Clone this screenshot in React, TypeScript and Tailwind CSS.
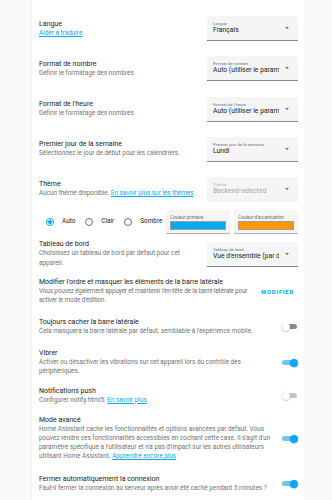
import React from "react";

const font = { fontFamily: "Roboto, 'Noto Sans', sans-serif" };

function Select({ label, value, disabled }: { label: string; value: string; disabled?: boolean }) {
  return (
    <div
      className={`relative w-[91px] h-[25px] shrink-0 bg-[#f5f5f5] rounded-t-[2px] pl-[6px] pt-[5px] ${
        disabled ? "" : "border-b border-[#8a8a8a]"
      }`}
    >
      <div className={`text-[4.3px] leading-[5px] ${disabled ? "text-[#b5b5b5]" : "text-[#6f6f6f]"}`}>{label}</div>
      <div
        className={`text-[6.8px] leading-[9px] whitespace-nowrap overflow-hidden w-[66px] ${
          disabled ? "text-[#a8a8a8]" : "text-[#212121]"
        }`}
      >
        {value}
      </div>
      <div className="absolute right-[9px] top-[11px] w-0 h-0 border-l-[2.5px] border-r-[2.5px] border-t-[2.5px] border-l-transparent border-r-transparent border-t-[#6f6f6f]" />
    </div>
  );
}

function Toggle({ on, muted }: { on?: boolean; muted?: boolean }) {
  return (
    <div className="relative w-[15px] h-[8px] shrink-0 mr-[1px]">
      <div
        className={`absolute left-0 right-0 top-[1.5px] h-[5px] rounded-full ${
          on ? "bg-[#6ec8f5]" : muted ? "bg-[#c4c4c4]" : "bg-[#8a8a8a]"
        }`}
      />
      <div
        className={`absolute top-0 w-[8px] h-[8px] rounded-full shadow-[0_0.5px_1.5px_rgba(0,0,0,0.35)] ${
          on ? "right-[-1px] bg-[#03a9f4]" : "left-[0px] bg-white"
        }`}
      />
    </div>
  );
}

function Row({
  title,
  children,
  control,
  h,
  tight,
}: {
  title: string;
  children?: React.ReactNode;
  control?: React.ReactNode;
  h: string;
  tight?: boolean;
}) {
  return (
    <div className={`flex items-center ${h}`}>
      <div className="flex-1 min-w-0 pr-[6px]">
        <div className="text-[7px] leading-[9px] text-[#212121]">{title}</div>
        <div
          className={`text-[6.4px] leading-[9.3px] text-[#727272] ${tight ? "tracking-[-0.15px]" : ""}`}
        >
          {children}
        </div>
      </div>
      {control}
    </div>
  );
}

function Link({ children }: { children: React.ReactNode }) {
  return <span className="text-[#03a9f4] underline">{children}</span>;
}

function Radio({ label, checked }: { label: string; checked?: boolean }) {
  return (
    <div className="flex items-center">
      <div
        className={`w-[8px] h-[8px] rounded-full border-[1px] flex items-center justify-center ${
          checked ? "border-[#03a9f4]" : "border-[#6f6f6f]"
        }`}
      >
        {checked && <div className="w-[4px] h-[4px] rounded-full bg-[#03a9f4]" />}
      </div>
      <span className="ml-[8px] text-[6.4px] text-[#212121]">{label}</span>
    </div>
  );
}

function ColorField({ label, color }: { label: string; color: string }) {
  return (
    <div className="w-[64px] h-[24px] bg-[#f5f5f5] border-b border-[#b0b0b0] px-[4px] pt-[5px]">
      <div className="text-[4.5px] leading-[6px] text-[#6f6f6f] whitespace-nowrap">{label}</div>
      <div className="h-[9px] border border-[#9e9e9e]" style={{ background: color }} />
    </div>
  );
}

export default function App() {
  return (
    <div className="min-h-screen bg-[#fafafa] overflow-hidden" style={font}>
      <div className="ml-[32px] w-[273px] h-[500px] bg-white shadow-[0_0_1px_rgba(0,0,0,0.15)] px-[7px] pt-[8.5px]">
        <Row title="Langue" h="h-[40.3px]" control={<Select label="Langue" value="Français" />}>
          <Link>Aider à traduire</Link>
        </Row>
        <Row
          title="Format de nombre"
          h="h-[40.3px]"
          control={<Select label="Format de nombre" value="Auto (utiliser le paramètre)" />}
        >
          Définir le formatage des nombres
        </Row>
        <Row
          title="Format de l'heure"
          h="h-[40.3px]"
          control={<Select label="Format de l'heure" value="Auto (utiliser le paramètre)" />}
        >
          Définir le formatage des nombres
        </Row>
        <Row
          title="Premier jour de la semaine"
          h="h-[40.3px]"
          control={<Select label="Premier jour de la semaine" value="Lundi" />}
        >
          Sélectionnez le jour de début pour les calendriers.
        </Row>
        <Row title="Thème" h="h-[39px]" control={<Select label="Thème" value="Backend-selected" disabled />}>
          Aucun thème disponible. <Link>En savoir plus sur les thèmes</Link>
        </Row>
        <div className="flex items-center h-[26px]">
          <div className="flex items-center gap-[10px] pl-[7px] flex-1">
            <Radio label="Auto" checked />
            <Radio label="Clair" />
            <Radio label="Sombre" />
          </div>
          <div className="flex gap-[4px]">
            <ColorField label="Couleur primaire" color="#03a9f4" />
            <ColorField label="Couleur d'accentuation" color="#ff9800" />
          </div>
        </div>
        <Row
          title="Tableau de bord"
          h="h-[39px]"
          control={<Select label="Tableau de bord" value="Vue d'ensemble (par défaut)" />}
        >
          Choisissez un tableau de bord par défaut pour cet appareil.
        </Row>
        <Row
          title="Modifier l'ordre et masquer les éléments de la barre latérale"
          h="h-[36px]"
          tight
          control={
            <div className="text-[6px] font-bold tracking-[0.7px] text-[#03a9f4] pr-[4px]">MODIFIER</div>
          }
        >
          Vous pouvez également appuyer et maintenir l'en-tête de la barre latérale pour activer le mode d'édition.
        </Row>
        <Row title="Toujours cacher la barre latérale" h="h-[34px]" control={<Toggle />}>
          Cela masquera la barre latérale par défaut, semblable à l'expérience mobile.
        </Row>
        <Row title="Vibrer" h="h-[38px]" control={<Toggle on />}>
          Activer ou désactiver les vibrations sur cet appareil lors du contrôle des périphériques.
        </Row>
        <Row title="Notifications push" h="h-[28px]" control={<Toggle muted />}>
          Configurer notify.html5. <Link>En savoir plus</Link>
        </Row>
        <Row title="Mode avancé" h="h-[58px]" control={<Toggle on />}>
          Home Assistant cache les fonctionnalités et options avancées par défaut. Vous pouvez rendre ces
          fonctionnalités accessibles en cochant cette case. Il s'agit d'un paramètre spécifique à l'utilisateur et
          n'a pas d'impact sur les autres utilisateurs utilisant Home Assistant. <Link>Apprendre encore plus</Link>
        </Row>
        <Row title="Fermer automatiquement la connexion" h="h-[32px]" control={<Toggle on />}>
          Faut-il fermer la connexion au serveur après avoir été caché pendant 5 minutes ?
        </Row>
      </div>
    </div>
  );
}
